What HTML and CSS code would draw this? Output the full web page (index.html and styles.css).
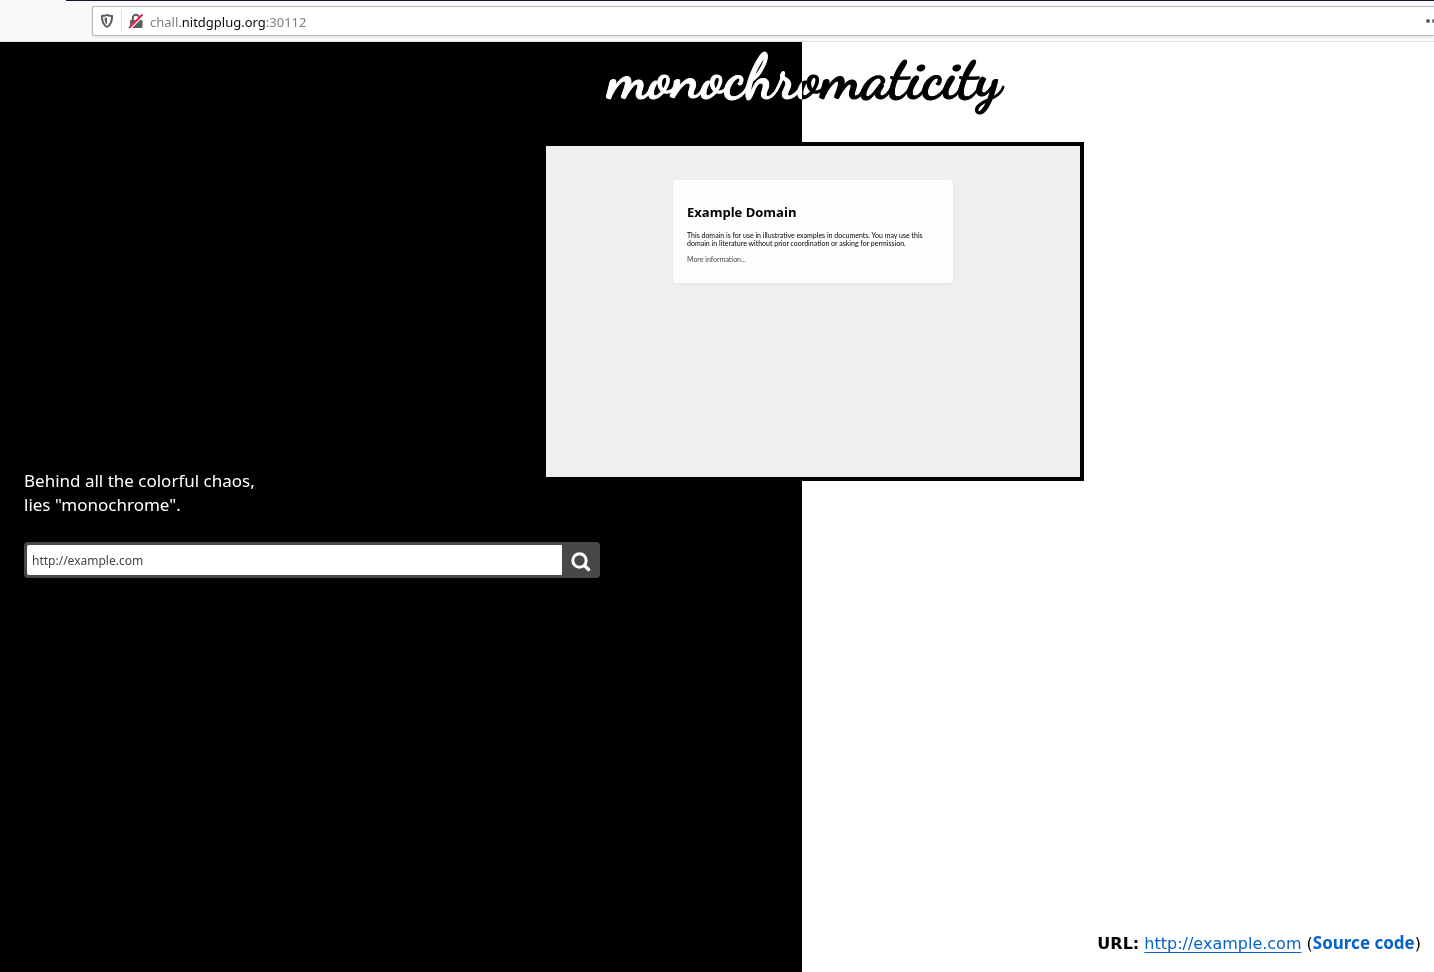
FILE: index.html
```html
<!DOCTYPE html>
<html lang="en">
<head>
<meta charset="utf-8">
<meta name="viewport" content="width=device-width, initial-scale=1">
<title>monochromaticity</title>
<link rel="stylesheet" href="styles.css">
</head>
<body>
<header class="toolbar">
  <div class="address">
    <svg class="shield" width="14" height="16" viewBox="0 0 14 16" aria-hidden="true">
      <path d="M7 1.800C5.600 2.500 3.700 2.900 1.900 3c0 5.200 1 8.700 5.100 11C11.100 11.700 12.100 8.200 12.100 3 10.300 2.900 8.400 2.500 7 1.800z" fill="none" stroke="#5e5e5e" stroke-width="2" stroke-linejoin="round"/>
      <path d="M7 4.500v7C5 9.900 4.600 7.700 4.500 5 5.400 4.900 6.200 4.800 7 4.500z" fill="#5e5e5e"/>
    </svg>
    <span class="divider"></span>
    <svg class="lock" width="16" height="16" viewBox="0 0 16 16" aria-hidden="true">
      <path d="M4.800 7.500V5a3.200 3.200 0 0 1 6.400 0v2.500" fill="none" stroke="#5e5e5e" stroke-width="2"/>
      <rect x="2" y="7" width="12.500" height="8" rx="1.200" fill="#5e5e5e"/>
      <path d="M1 16L15 2" stroke="#fff" stroke-width="3"/>
      <path d="M1 15L14.500 1.500" stroke="#f3174b" stroke-width="2"/>
    </svg>
    <span class="location">chall.<span class="host">nitdgplug.org</span>:30112</span>
    <svg class="more" width="8" height="6" viewBox="0 0 8 6" aria-hidden="true">
      <circle cx="2" cy="3" r="2" fill="#666"/><circle cx="8" cy="3" r="2" fill="#666"/>
    </svg>
  </div>
</header>
<main class="page">
  <section class="showcase">
    <h1 class="title">monochromaticity</h1>
    <div class="preview">
      <article class="card">
        <h2 class="card-title">Example Domain</h2>
        <p class="card-text">This domain is for use in illustrative examples in documents. You may use this domain in literature without prior coordination or asking for permission.</p>
        <a class="card-link" href="#more">More information...</a>
      </article>
    </div>
  </section>
  <section class="lookup">
    <p class="tagline">Behind all the colorful chaos,<br>lies "monochrome".</p>
    <form class="search">
      <input class="search-input" type="text" aria-label="Website address" value="http://example.com">
      <button class="search-button" type="button" aria-label="Search">
        <svg width="20" height="20" viewBox="0 0 20 20" aria-hidden="true">
          <circle cx="8.500" cy="8.500" r="6.700" fill="none" stroke="#fff" stroke-width="3"/>
          <path d="M13.400 13.400L17.500 17.500" stroke="#fff" stroke-width="3.400" stroke-linecap="round"/>
        </svg>
      </button>
    </form>
  </section>
  <footer class="source"><strong>URL:</strong> <a class="url" href="#url">http://example.com</a> (<a class="code" href="#source">Source code</a>)</footer>
</main>
</body>
</html>
```
FILE: styles.css
```css
* { box-sizing: border-box; }

body {
  margin: 0;
  min-height: 100vh;
  display: flex;
  flex-direction: column;
  overflow-x: hidden;
  font-family: "DejaVu Sans", "Noto Sans", sans-serif;
  background: #fff;
}

.toolbar {
  padding: 6px 0 5px 92px;
  border-bottom: 1px solid #e0e0e1;
  background: linear-gradient(90deg, #f9f9fa 66px, #17163a 66px) top / 100% 1px no-repeat, #f9f9fa;
}

.address {
  display: flex;
  align-items: center;
  height: 30px;
  padding-left: 7px;
  border: 1px solid #b9b9b9;
  border-width: 1px 0 1px 1px;
  border-radius: 2px 0 0 2px;
  background: #fff;
  box-shadow: 0 1px 3px rgba(0, 0, 0, 0.1);
}

.divider {
  width: 1px;
  height: 22px;
  margin: 0 6px 0 7px;
  background: #dedede;
}

.location {
  margin-left: 6px;
  padding-top: 1px;
  font: 13px "Noto Sans", sans-serif;
  color: #808080;
}

.host { color: #0c0c0d; }

.more { margin-left: auto; }

.page {
  flex: 1;
  display: grid;
  grid-template: 1fr / 1fr;
  background: linear-gradient(90deg, #000 calc(56% - 1px), #fff calc(56% - 1px));
}

.showcase, .lookup, .source { grid-area: 1 / 1; }

.showcase {
  display: flex;
  flex-direction: column;
  align-items: center;
  padding-left: 192px;
}

.title {
  margin: 0;
  height: 100px;
  padding-right: 16px;
  font: bold 62px/70px "Dancing Script", "Brush Script MT", cursive;
  -webkit-text-stroke: 1px #fff;
  color: #fff;
  mix-blend-mode: difference;
}

.preview {
  width: 542px;
  max-width: 100%;
  min-height: 339px;
  padding: 34px 127px;
  border: 4px solid #000;
  background: #efefef;
}

.card {
  padding: 22px 14px 20px;
  border-radius: 4px;
  background: #fdfdfd;
  box-shadow: 1px 1px 4px rgba(0, 0, 0, 0.04);
  font-family: "Open Sans", "Noto Sans", sans-serif;
}

.card-title {
  margin: 0 0 9px;
  font-size: 13px;
  line-height: 20px;
}

.card-text {
  margin: 0 0 8px;
  padding-right: 14px;
  font: 7px/8px Lato, sans-serif;
}

.card-link {
  display: block;
  font: 7px/8px Lato, sans-serif;
  color: #484848;
  text-decoration: none;
}

.lookup {
  align-self: center;
  justify-self: start;
  width: 600px;
  max-width: 100%;
  padding: 33px 0 0 24px;
}

.tagline {
  margin: 0 0 25px;
  font: 17px/24px "Noto Sans", sans-serif;
  color: #fff;
}

.search {
  display: flex;
  height: 36px;
  border: 3px solid #484848;
  border-radius: 4px;
  background: #484848;
}

.search-input {
  flex: 1;
  min-width: 0;
  padding: 0 5px;
  border: 0;
  border-radius: 2px 0 0 2px;
  background: #fff;
  font: 12px "Noto Sans", sans-serif;
  color: #444;
}

.search-button {
  display: grid;
  place-items: center;
  width: 35px;
  padding: 3px 0 0 3px;
  border: 0;
  background: #484848;
}

.source {
  align-self: end;
  justify-self: end;
  padding: 0 13px 16px 0;
  font-size: 16px;
  line-height: 24px;
  color: #000;
}

.url, .code { color: #0563c9; }

.url { text-underline-offset: 3px; }

.code {
  font-family: "Noto Sans", sans-serif;
  font-size: 17px;
  font-weight: bold;
  text-decoration: none;
}
```
